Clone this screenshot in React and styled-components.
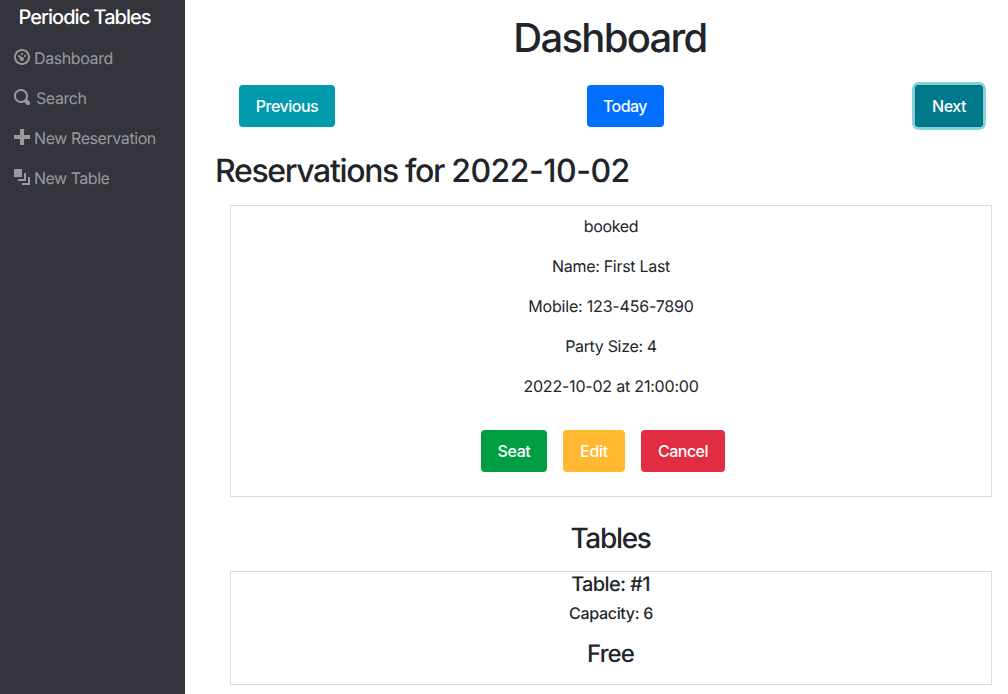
import React from "react";
import styled, { createGlobalStyle } from "styled-components";

const GlobalStyle = createGlobalStyle`
  *, *::before, *::after { box-sizing: border-box; }
  body {
    margin: 0;
    background: #fff;
    color: #212529;
    font-family: Inter, "Liberation Sans", sans-serif;
    font-size: 16px;
    line-height: 24px;
    overflow: hidden;
    text-rendering: geometricPrecision;
  }
`;

const Page = styled.div`
  display: flex;
  height: 694px;
`;

const Sidebar = styled.nav`
  flex: 0 0 185px;
  background: #34343c;
`;

const Brand = styled.div`
  padding: 2px 0 6px 18.5px;
  height: 38px;
  font-size: 20px;
  font-weight: 500;
  line-height: 30px;
  letter-spacing: ${(p) => p.$spacing};
  color: #fff;
  white-space: nowrap;
`;

const NavItem = styled.a`
  display: flex;
  align-items: center;
  gap: ${(p) => p.$gap || "4px"};
  height: 40px;
  padding-left: 14px;
  color: #9a9a9e;
  letter-spacing: ${(p) => p.$spacing};
  white-space: nowrap;
`;

const Icon = styled.svg`
  width: 16px;
  height: 16px;
  margin-bottom: 2px;
  fill: currentColor;
`;

const Main = styled.main`
  flex: 1;
  padding: 14px 16px 0 30px;
`;

const Title = styled.h1`
  margin: 0 0 23px;
  font-size: 40px;
  font-weight: 500;
  line-height: 48px;
  letter-spacing: ${(p) => p.$spacing};
  text-align: center;
  padding-left: 13px;
`;

const DateNav = styled.div`
  display: flex;
  justify-content: space-between;
  padding: 0 9px 0 24px;
`;

const tones = {
  info: "#0099ae",
  primary: "#006fff",
  active: "#007a8a",
  success: "#009e42",
  warning: "#ffb830",
  danger: "#e12d41",
};

const Button = styled.button`
  width: ${(p) => p.$width}px;
  height: 42px;
  padding: 0;
  border: 0;
  border-radius: 4px;
  background: ${(p) => tones[p.$tone]};
  box-shadow: ${(p) => (p.$focused ? "inset 0 0 0 1px #006f80, 0 0 0 3px #86d1dc" : "none")};
  color: #fff;
  font: 500 16px/24px Inter, "Liberation Sans", sans-serif;
  letter-spacing: ${(p) => p.$spacing};
`;

const SectionTitle = styled.h2`
  margin: 25px 0 15px;
  font-size: 32px;
  font-weight: 500;
  line-height: 38px;
  letter-spacing: -1.35px;
`;

const SectionDate = styled.span`
  letter-spacing: -0.52px;
`;

const Card = styled.section`
  height: ${(p) => p.$height}px;
  margin-left: 15px;
  padding-top: ${(p) => p.$top || 0}px;
  border: 1px solid #dadde0;
  text-align: center;
`;

const Detail = styled.p`
  margin: 0 0 16px;
  letter-spacing: ${(p) => p.$spacing};
`;

const Actions = styled.div`
  display: flex;
  justify-content: center;
  gap: 16px;
  padding: 16px 16px 0 0;
`;

const Heading = styled.h3`
  margin: ${(p) => p.$margin};
  font-size: ${(p) => p.$size}px;
  font-weight: 500;
  line-height: ${(p) => p.$line}px;
  letter-spacing: ${(p) => p.$spacing};
  text-align: center;
`;

const navItems = [
  {
    label: "Dashboard",
    spacing: "-0.4px",
    path: "M4 0c-2.2 0-4 1.8-4 4s1.8 4 4 4 4-1.8 4-4-1.8-4-4-4zm0 1c1.66 0 3 1.34 3 3s-1.34 3-3 3-3-1.34-3-3 1.34-3 3-3zm0 1c-.28 0-.5.22-.5.5s.22.5.5.5.5-.22.5-.5-.22-.5-.5-.5zm-1.66 1a.5.5 0 0 0-.19.84l.91.91c-.02.08-.06.16-.06.25 0 .55.45 1 1 1s1-.45 1-1-.45-1-1-1c-.09 0-.17.04-.25.06l-.91-.91a.5.5 0 0 0-.5-.15zm3.16 0c-.28 0-.5.22-.5.5s.22.5.5.5.5-.22.5-.5-.22-.5-.5-.5z",
  },
  {
    label: "Search",
    spacing: "-0.42px",
    gap: "6px",
    path: "M3.5 0c-1.93 0-3.5 1.57-3.5 3.5s1.57 3.5 3.5 3.5c.59 0 1.17-.14 1.66-.41a1 1 0 0 0 .13.13l1 1a1.02 1.02 0 1 0 1.44-1.44l-1-1a1 1 0 0 0-.16-.13c.27-.49.44-1.06.44-1.66 0-1.93-1.55-3.5-3.5-3.5zm0 1c1.39 0 2.5 1.1 2.5 2.5 0 .66-.24 1.27-.66 1.72l-.03.03a1 1 0 0 0-.13.13c-.44.4-1.04.63-1.69.63-1.4 0-2.5-1.11-2.5-2.5s1.1-2.5 2.5-2.5z",
  },
  {
    label: "New Reservation",
    spacing: "-0.42px",
    path: "M3 0v3h-3v2h3v3h2v-3h3v-2h-3v-3h-2z",
  },
  {
    label: "New Table",
    spacing: "-0.5px",
    path: "M0 0v4h4v-4h-4zm5 2v3h-3v1h4v-4h-1zm2 2v3h-3v1h4v-4h-1z",
  },
];

const details = [
  ["booked", "-0.35px"],
  ["Name: First Last", "-0.29px"],
  ["Mobile: 123-456-7890", "-0.2px"],
  ["Party Size: 4", "-0.33px"],
  ["2022-10-02 at 21:00:00", "-0.2px"],
];

export default function App() {
  return (
    <>
      <GlobalStyle />
      <Page>
        <Sidebar>
          <Brand $spacing="-0.97px">Periodic Tables</Brand>
          {navItems.map((item) => (
            <NavItem key={item.label} $gap={item.gap} $spacing={item.spacing}>
              <Icon viewBox="0 0 8 8">
                <path d={item.path} />
              </Icon>
              <span>{item.label}</span>
            </NavItem>
          ))}
        </Sidebar>
        <Main>
          <Title $spacing="-1.7px">Dashboard</Title>
          <DateNav>
            <Button $tone="info" $width={96} $spacing="-0.5px">Previous</Button>
            <Button $tone="primary" $width={77} $spacing="-0.55px">Today</Button>
            <Button $tone="active" $width={68} $spacing="-0.45px" $focused>Next</Button>
          </DateNav>
          <SectionTitle>
            Reservations for <SectionDate>2022-10-02</SectionDate>
          </SectionTitle>
          <Card $height={292} $top={8}>
            {details.map(([text, spacing]) => (
              <Detail key={text} $spacing={spacing}>{text}</Detail>
            ))}
            <Actions>
              <Button $tone="success" $width={66} $spacing="-0.4px">Seat</Button>
              <Button $tone="warning" $width={62} $spacing="-0.3px">Edit</Button>
              <Button $tone="danger" $width={84} $spacing="-0.5px">Cancel</Button>
            </Actions>
          </Card>
          <Heading $size={28} $line={34} $margin="24px 0 16px 14px" $spacing="-1.3px">Tables</Heading>
          <Card $height={114}>
            <Heading as="h4" $size={20} $line={24} $margin="0 1px 8px 0" $spacing="-0.65px">Table: #1</Heading>
            <Heading as="h5" $size={16} $line={19} $margin="0 0 16px" $spacing="-0.3px">Capacity: 6</Heading>
            <Heading as="h4" $size={24} $line={29} $margin="0 1px 0 0" $spacing="-0.9px">Free</Heading>
          </Card>
        </Main>
      </Page>
    </>
  );
}
